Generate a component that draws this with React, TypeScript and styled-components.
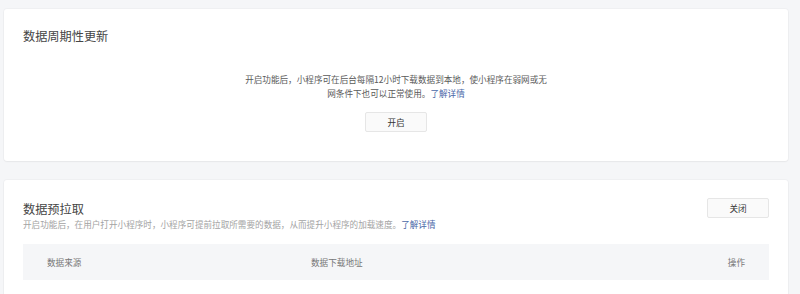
import React from "react";
import styled, { createGlobalStyle } from "styled-components";

const GlobalStyle = createGlobalStyle`
  html, body {
    margin: 0;
    padding: 0;
    background: #f5f6f8;
    font-family: "Noto Sans CJK SC", "Noto Sans", sans-serif;
  }
`;

const Page = styled.div`
  display: flex;
  flex-direction: column;
  gap: 19px;
  padding: 9px 12px 0 4px;
  width: 784px;
`;

const Card = styled.section<{ $pt: number; $pb: number }>`
  background: #ffffff;
  border-radius: 3px;
  box-shadow: 0 0 0 1px rgba(0, 0, 0, 0.025), 0 1px 2px rgba(0, 0, 0, 0.04);
  padding: ${(p) => p.$pt}px 19px ${(p) => p.$pb}px 19px;
  display: flex;
  flex-direction: column;
`;

const Title = styled.h2<{ $mt?: number }>`
  margin: ${(p) => p.$mt ?? 0}px 0 0 0;
  font-size: 12.2px;
  line-height: 16px;
  font-weight: 400;
  color: #454545;
`;

const Center = styled.div`
  display: flex;
  flex-direction: column;
  align-items: center;
  margin-top: 28px;
`;

const Desc = styled.p`
  margin: 0;
  max-width: 306px;
  text-align: center;
  font-size: 8.6px;
  line-height: 14px;
  color: #5a5a5a;
`;

const Link = styled.a`
  color: #4a69a8;
  text-decoration: none;
`;

const Button = styled.button<{ $mt?: number }>`
  margin-top: ${(p) => p.$mt ?? 0}px;
  width: 62px;
  height: 20px;
  padding: 0;
  border: 1px solid #e6e6e6;
  border-radius: 2px;
  background: #fafafa;
  font-family: inherit;
  font-size: 8.6px;
  color: #333;
  cursor: pointer;
  flex-shrink: 0;
`;

const HeaderRow = styled.div`
  display: flex;
  justify-content: space-between;
  align-items: flex-start;
`;

const HeaderText = styled.div`
  display: flex;
  flex-direction: column;
`;

const SubDesc = styled.p`
  margin: 2px 0 0 0;
  font-size: 8.6px;
  line-height: 10px;
  color: #a3a3a3;
`;

const TableHead = styled.div`
  margin-top: 15px;
  height: 36px;
  background: #f5f6f8;
  display: grid;
  grid-template-columns: 264px 1fr auto;
  align-items: center;
  padding: 0 24px;
`;

const Th = styled.span`
  font-size: 8.6px;
  color: #777;
`;

const TableBody = styled.div`
  height: 40px;
`;

export default function App() {
  return (
    <>
      <GlobalStyle />
      <Page>
        <Card $pt={19} $pb={29}>
          <Title>数据周期性更新</Title>
          <Center>
            <Desc>
              开启功能后，小程序可在后台每隔12小时下载数据到本地，使小程序在弱网或无网条件下也可以正常使用。
              <Link href="#">了解详情</Link>
            </Desc>
            <Button $mt={12}>开启</Button>
          </Center>
        </Card>
        <Card $pt={18} $pb={20}>
          <HeaderRow>
            <HeaderText>
              <Title $mt={3}>数据预拉取</Title>
              <SubDesc>
                开启功能后，在用户打开小程序时，小程序可提前拉取所需要的数据，从而提升小程序的加载速度。
                <Link href="#">了解详情</Link>
              </SubDesc>
            </HeaderText>
            <Button>关闭</Button>
          </HeaderRow>
          <TableHead>
            <Th>数据来源</Th>
            <Th>数据下载地址</Th>
            <Th>操作</Th>
          </TableHead>
          <TableBody />
        </Card>
      </Page>
    </>
  );
}
